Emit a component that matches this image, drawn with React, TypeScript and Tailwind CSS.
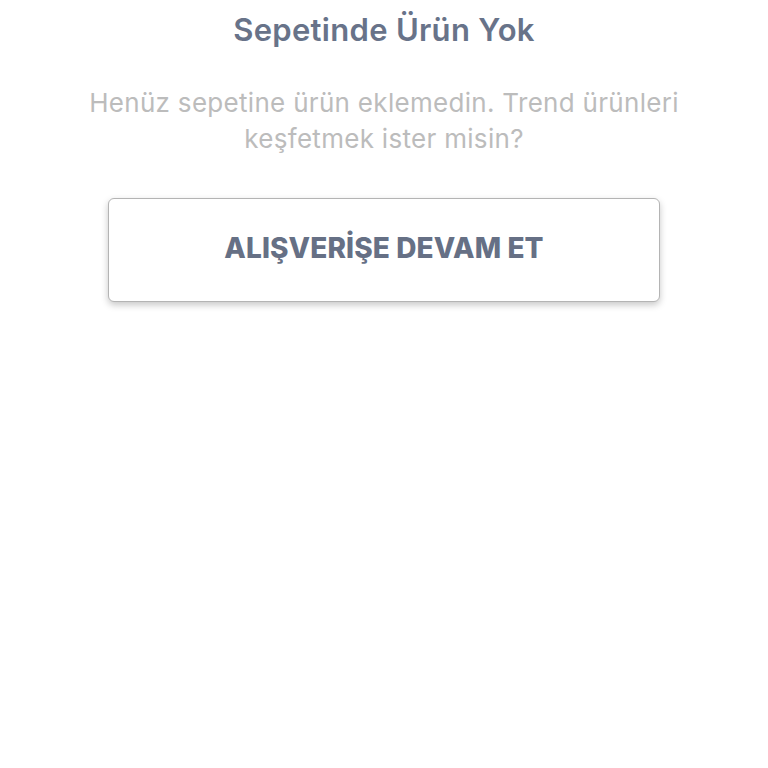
export default function App() {
  return (
    <div className="w-[768px] h-[768px] bg-white flex flex-col items-center" style={{ fontFamily: "Inter, 'Open Sans', sans-serif" }}>
      <h1 className="mt-[10px] text-[31px] leading-[40px] font-semibold text-[#687389] tracking-[0.3px]">Sepetinde Ürün Yok</h1>
      <p className="mt-[35px] w-[680px] text-center text-[26px] leading-[36px] text-[#bcbcbc] tracking-[0.3px]">
        Henüz sepetine ürün eklemedin. Trend ürünleri keşfetmek ister misin?
      </p>
      <button className="mt-[41px] w-[552px] h-[104px] rounded-[6px] border border-[#b4b4b4] bg-white shadow-[0_3px_7px_rgba(0,0,0,0.22)] flex items-center justify-center pb-[4px]">
        <span className="text-[28px] font-extrabold text-[#667085] tracking-[0.1px]">ALIŞVERİŞE DEVAM ET</span>
      </button>
    </div>
  );
}
